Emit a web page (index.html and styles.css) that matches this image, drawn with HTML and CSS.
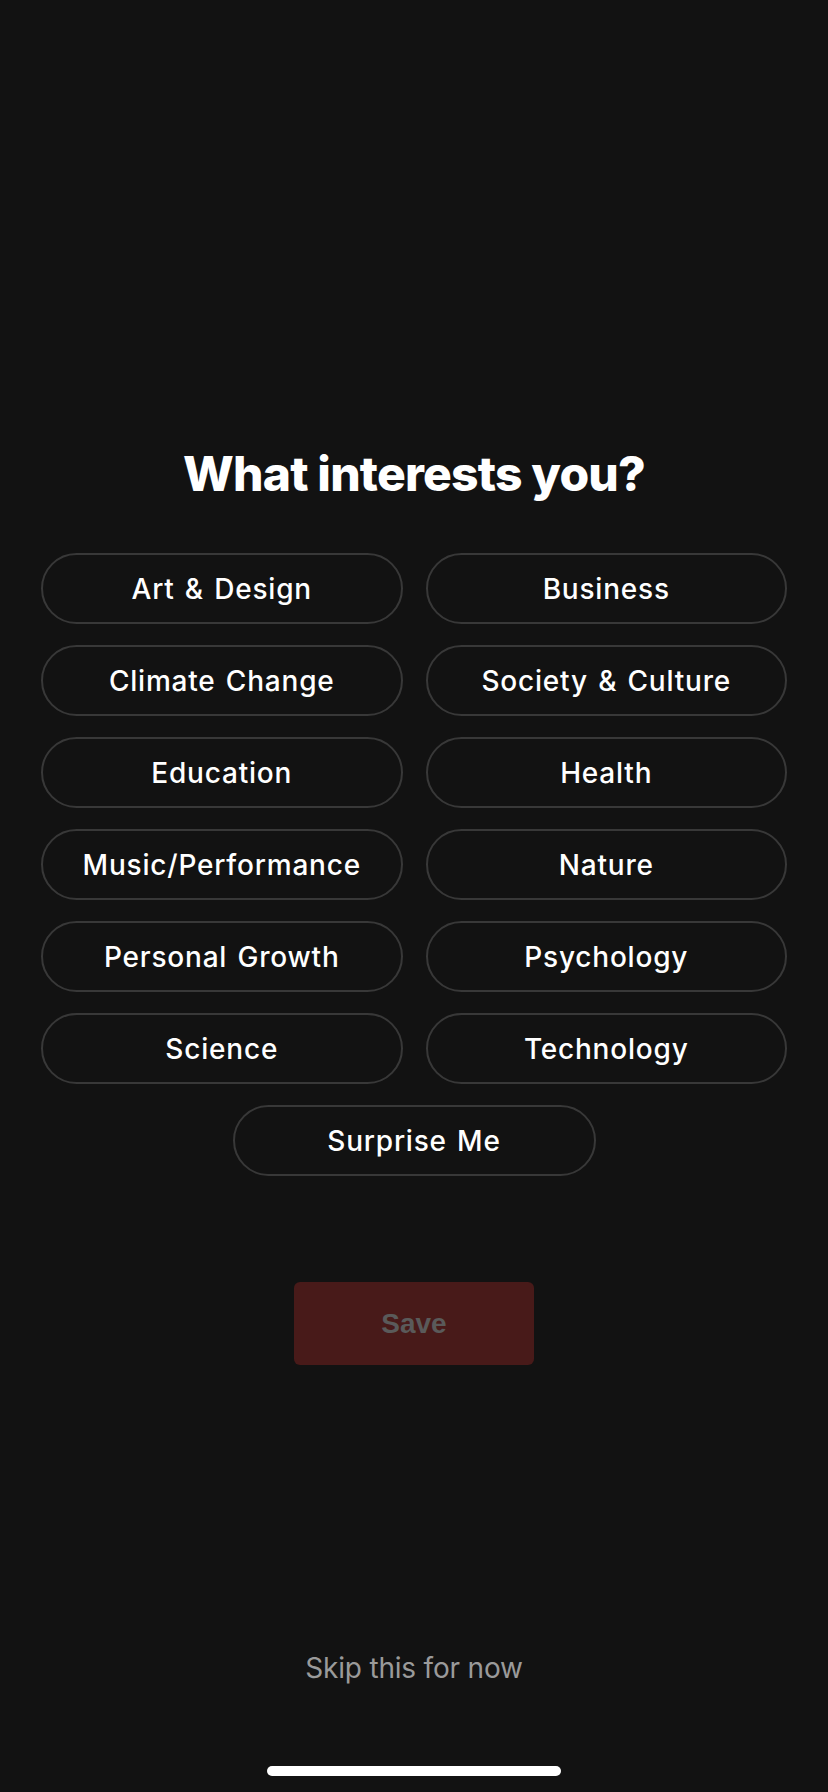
FILE: index.html
```html
<!DOCTYPE html>
<html lang="en">
<head>
<meta charset="utf-8">
<title>What interests you?</title>
<link rel="stylesheet" href="styles.css">
</head>
<body>
<main class="screen">
  <h1 class="title">What interests you?</h1>
  <div class="topics">
    <button class="pill">Art &amp; Design</button>
    <button class="pill">Business</button>
    <button class="pill">Climate Change</button>
    <button class="pill">Society &amp; Culture</button>
    <button class="pill">Education</button>
    <button class="pill">Health</button>
    <button class="pill">Music/Performance</button>
    <button class="pill">Nature</button>
    <button class="pill">Personal Growth</button>
    <button class="pill">Psychology</button>
    <button class="pill">Science</button>
    <button class="pill">Technology</button>
    <button class="pill pill-wide">Surprise Me</button>
  </div>
  <button class="save" disabled>Save</button>
  <a class="skip" href="#">Skip this for now</a>
  <div class="home-indicator"></div>
</main>
</body>
</html>
```

FILE: styles.css
```css
* {
  box-sizing: border-box;
}

html, body {
  margin: 0;
  padding: 0;
  background: #121212;
}

body {
  font-family: Inter, "Noto Sans", "Liberation Sans", sans-serif;
  color: #ffffff;
}

.screen {
  width: 828px;
  min-height: 1792px;
  display: flex;
  flex-direction: column;
  align-items: center;
  padding-top: 445px;
}

.title {
  margin: 0;
  font-size: 48px;
  line-height: 58px;
  font-weight: 800;
  letter-spacing: -0.8px;
  text-align: center;
}

.topics {
  margin-top: 50px;
  width: 100%;
  padding: 0 41px;
  display: grid;
  grid-template-columns: 1fr 1fr;
  column-gap: 23px;
  row-gap: 21px;
}

.pill {
  height: 71px;
  border: 2px solid #383838;
  border-radius: 36px;
  background: transparent;
  color: #ffffff;
  font-family: Inter, "Noto Sans", "Liberation Sans", sans-serif;
  font-size: 28px;
  font-weight: 500;
  letter-spacing: 0.8px;
  word-spacing: 2px;
  display: flex;
  align-items: center;
  justify-content: center;
  padding: 0;
}

.pill-wide {
  grid-column: 1 / -1;
  justify-self: center;
  width: 363px;
}

.save {
  margin-top: 106px;
  width: 240px;
  height: 83px;
  border: none;
  border-radius: 6px;
  background: #481a19;
  color: #5a5a5a;
  font-family: "Liberation Sans", Arial, sans-serif;
  font-size: 28px;
  font-weight: 700;
  padding: 0;
}

.skip {
  margin-top: 286px;
  font-size: 28px;
  line-height: 34px;
  font-weight: 400;
  letter-spacing: -0.2px;
  color: #9a9a9a;
  text-decoration: none;
}

.home-indicator {
  margin-top: 81px;
  width: 294px;
  height: 10px;
  border-radius: 5px;
  background: #ffffff;
}
```
